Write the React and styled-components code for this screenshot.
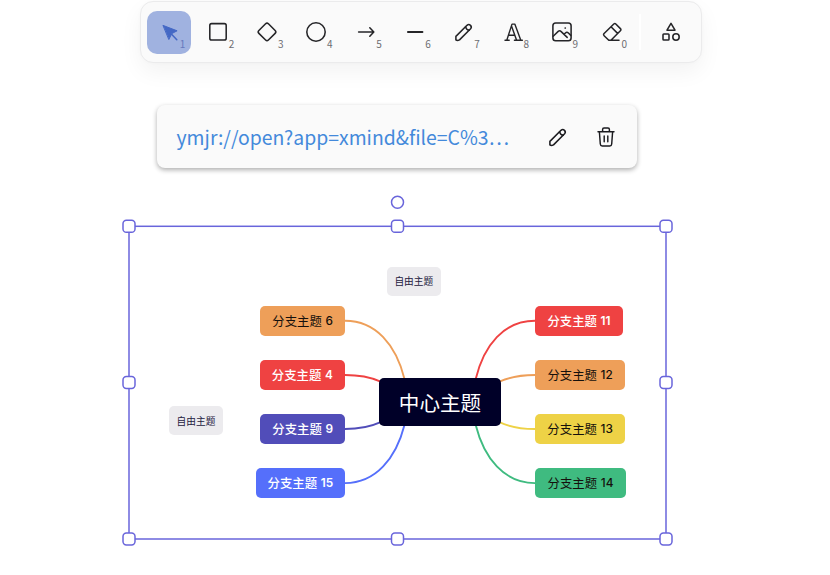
import React from "react";
import styled, { createGlobalStyle } from "styled-components";

const GlobalStyle = createGlobalStyle`
  * { box-sizing: border-box; }
  body { margin: 0; background: #fff; overflow: hidden; }
  button { border: 0; padding: 0; background: none; font: inherit; color: inherit; }
`;

const Page = styled.main`
  position: relative;
  width: 830px;
  height: 575px;
  overflow: hidden;
  background: #fff;
  color: #1b1b1f;
  font-family: "Noto Sans CJK SC", sans-serif;
`;

const Toolbar = styled.div`
  display: flex;
  align-items: center;
  width: 562px;
  height: 62px;
  margin: 1px 0 0 140px;
  padding: 0 6px;
  background: #fafafa;
  border: 1px solid #ebebec;
  border-radius: 13px;
  box-shadow: 0 9px 22px rgba(0, 0, 0, 0.05), 0 0 4px rgba(0, 0, 0, 0.02);
`;

const Tools = styled.div`
  display: flex;
  gap: 5.1px;
`;

const ToolButton = styled.button`
  position: relative;
  display: grid;
  place-items: center;
  width: 44px;
  height: 43px;
  border-radius: 10px;
  background: ${(p) => (p.$active ? "#a0b2e0" : "transparent")};
  color: ${(p) => (p.$active ? "#4468c5" : "#252528")};
`;

const KeyHint = styled.span`
  position: absolute;
  right: 5.7px;
  bottom: 3px;
  font-size: 10px;
  line-height: 14px;
  color: ${(p) => (p.$active ? "#6679bd" : "#6d6d71")};
`;

const Divider = styled.div`
  width: 2px;
  height: 36px;
  margin: 0 8px 0 6px;
  background: #fff;
`;

const Glyph = styled.svg`
  display: block;
  width: 26px;
  height: 26px;
  fill: none;
  stroke: currentColor;
  stroke-width: 1.55;
  stroke-linecap: round;
  stroke-linejoin: round;
`;

const LinkCard = styled.div`
  display: flex;
  align-items: center;
  width: 480px;
  height: 63px;
  margin: 42px 0 0 157px;
  padding: 0 18px 0 19.5px;
  background: #fafafa;
  border-radius: 8px;
  box-shadow: 0 2px 5px rgba(0, 0, 0, 0.32);
`;

const LinkText = styled.a`
  width: 350.5px;
  padding-top: 1px;
  color: #4389db;
  font-family: "Noto Sans CJK SC", sans-serif;
  font-size: 19.4px;
  line-height: 30px;
  white-space: nowrap;
`;

const CardButton = styled.button`
  display: grid;
  place-items: center;
  width: 26px;
  height: 26px;
  margin: 0 0 0 ${(p) => p.$gap}px;
`;

const Board = styled.section`
  position: absolute;
  inset: 0;
  pointer-events: none;
`;

const Drawing = styled.svg`
  position: absolute;
  inset: 0;
  width: 830px;
  height: 575px;
  fill: none;
`;

const Topic = styled.div`
  position: absolute;
  left: ${(p) => p.$x}px;
  top: ${(p) => p.$y}px;
  width: ${(p) => p.$w}px;
  height: 30.4px;
  display: flex;
  align-items: center;
  justify-content: center;
  gap: 3.6px;
  border-radius: 5px;
  background: ${(p) => p.$bg};
  color: ${(p) => (p.$dark ? "#15100c" : "#fff")};
  font-family: "Noto Sans CJK SC", sans-serif;
  font-weight: ${(p) => (p.$dark ? 400 : 500)};
  font-size: 12.4px;
  line-height: 18px;
  white-space: nowrap;
`;

const TopicNumber = styled.span`
  font-family: Inter, sans-serif;
  font-weight: ${(p) => (p.$dark ? 500 : 600)};
  font-size: 11.8px;
`;

const CentralTopic = styled(Topic)`
  height: 48px;
  background: #000028;
  font-size: 20.6px;
  font-weight: 400;
  line-height: 28px;
`;

const FreeTopic = styled(Topic)`
  height: 29px;
  background: #ecebee;
  color: #24213f;
  font-size: 9.7px;
  font-weight: 400;
`;

const PencilPath = () => (
  <g>
    <path d="M4.9 20.9 L4.9 17.4 L16 6.3 C18.4 4.2 21.6 7.4 19.6 9.8 L8.5 20.9 C7.3 21.5 5.9 21.7 4.9 20.9 Z" />
    <path d="M14.6 7.8 C15 9.8 16.3 11 18.3 11.2" />
  </g>
);

const tools = [
  {
    key: "1",
    active: true,
    icon: (
      <g>
        <path fill="currentColor" strokeWidth="1" d="M7.3 6.5 L21.1 11.8 L15.8 14.6 L13 20.2 Z" />
        <path d="M15.6 15.3 L20.8 20.7" />
      </g>
    ),
  },
  { key: "2", icon: <rect x="4.8" y="4.6" width="16.4" height="16.4" rx="1.8" /> },
  { key: "3", icon: <rect x="6.2" y="6.2" width="13.5" height="13.5" rx="2" transform="rotate(45 13 13)" /> },
  { key: "4", icon: <circle cx="13" cy="13" r="9.2" /> },
  { key: "5", icon: <path d="M6.6 13 H21.6 M17.8 8.8 L21.8 13 L17.8 17.2" /> },
  { key: "6", icon: <path d="M6.9 13 H21.5" strokeWidth="1.8" /> },
  { key: "7", icon: <PencilPath /> },
  {
    key: "8",
    icon: (
      <path
        strokeWidth="1.4"
        d="M5 21.2 H9.2 M14.4 21.2 H22.4 M6.8 21.2 L12 5.1 H14.8 L20.8 21.2 M16.6 21.2 L11.6 7.3 M8.6 16.2 H14.4"
      />
    ),
  },
  {
    key: "9",
    icon: (
      <g>
        <rect x="3.9" y="3.9" width="18.2" height="17.8" rx="2.8" />
        <path d="M4.2 17.2 L9.2 12.4 C10.4 11.4 11.2 11.6 12.2 12.6 L18.2 18.4 M15.2 15.2 L16.4 14 C17.4 13.1 18.4 13.1 19.4 14 L21.8 16.4" strokeWidth="1.5" />
        <path d="M16.2 9 H16.3" strokeWidth="1.7" />
      </g>
    ),
  },
  {
    key: "0",
    icon: (
      <path d="M21 21.2 H10.8 L6.1 16.7 C5.4 16 5.4 15.2 6.1 14.5 L15.8 5 C16.5 4.4 17.2 4.4 17.8 5 L22.4 9.6 C23.1 10.3 23.1 11.1 22.4 11.8 L13.2 21 M13 7.8 L19.6 14.4" />
    ),
  },
];

const branches = [
  { n: "6", x: 260.3, y: 305.6, w: 84.7, bg: "#ee9f59", dark: true },
  { n: "4", x: 259.6, y: 359.7, w: 85.4, bg: "#ef4242" },
  { n: "9", x: 260.3, y: 413.8, w: 84.7, bg: "#514db9" },
  { n: "15", x: 255.6, y: 467.9, w: 89.4, bg: "#556ffb" },
  { n: "11", x: 535, y: 305.6, w: 88, bg: "#ef4242" },
  { n: "12", x: 535, y: 359.7, w: 90.2, bg: "#ee9f59", dark: true },
  { n: "13", x: 535, y: 413.8, w: 90.2, bg: "#eed246", dark: true },
  { n: "14", x: 535, y: 467.9, w: 91, bg: "#3fbb80", dark: true },
];

const connectors = [
  ["#ee9f59", "M345 320.8 C376 320.8 396 345 404.5 379"],
  ["#ef4242", "M345 375 C359 375 370 377 380 381.4"],
  ["#514db9", "M345 429 C359 429 370 427 380 422.4"],
  ["#556ffb", "M345 483.1 C376 483.1 396 458 404.5 425"],
  ["#ef4242", "M535 320.8 C504 320.8 484 345 475.7 379"],
  ["#ee9f59", "M535 375 C521 375 510 377 500 381.4"],
  ["#eed246", "M535 429 C521 429 510 427 500 422.4"],
  ["#3fbb80", "M535 483.1 C504 483.1 484 458 475.7 425"],
];

const handles = [
  [129, 226.3], [397.5, 226.3], [666, 226.3],
  [129, 382.5], [666, 382.5],
  [129, 539], [397.5, 539], [666, 539],
];

export default function App() {
  return (
    <Page>
      <GlobalStyle />
      <Toolbar>
        <Tools>
          {tools.map((t) => (
            <ToolButton key={t.key} $active={t.active}>
              <Glyph viewBox="0 0 26 26">{t.icon}</Glyph>
              <KeyHint $active={t.active}>{t.key}</KeyHint>
            </ToolButton>
          ))}
        </Tools>
        <Divider />
        <ToolButton>
          <Glyph viewBox="0 0 26 26">
            <path d="M13 4.4 L17 11.2 H9 Z" />
            <rect x="5" y="15" width="6" height="6" rx="0.8" />
            <circle cx="18" cy="18" r="3.2" />
          </Glyph>
        </ToolButton>
      </Toolbar>

      <LinkCard>
        <LinkText>ymjr://open?app=xmind&amp;file=C%3…</LinkText>
        <CardButton $gap={18}>
          <Glyph viewBox="0 0 26 26"><PencilPath /></Glyph>
        </CardButton>
        <CardButton $gap={22}>
          <Glyph viewBox="0 0 26 26">
            <path d="M5 7.8 H21 M6.4 8 L7.3 20 C7.4 21.3 8 21.9 9.2 21.9 H16.8 C18 21.9 18.6 21.3 18.7 20 L19.6 8 M9.6 7.6 V5.5 C9.6 4.5 10 4 11 4 H15 C16 4 16.4 4.5 16.4 5.5 V7.6 M11.2 12 V17.8 M14.8 12 V17.8" strokeWidth="1.45" />
          </Glyph>
        </CardButton>
      </LinkCard>

      <Board>
        <Drawing viewBox="0 0 830 575">
          {connectors.map(([color, d]) => (
            <path key={d} d={d} stroke={color} strokeWidth="1.9" />
          ))}
        </Drawing>
        {branches.map((b) => (
          <Topic key={b.n} $x={b.x} $y={b.y} $w={b.w} $bg={b.bg} $dark={b.dark}>
            <span>分支主题</span>
            <TopicNumber $dark={b.dark}>{b.n}</TopicNumber>
          </Topic>
        ))}
        <CentralTopic $x={379} $y={378} $w={122}>中心主题</CentralTopic>
        <FreeTopic $x={387} $y={266.6} $w={53.6}>自由主题</FreeTopic>
        <FreeTopic $x={169.2} $y={406.2} $w={53.6}>自由主题</FreeTopic>
        <Drawing viewBox="0 0 830 575" stroke="#6965db">
          <rect x="129" y="226.3" width="537" height="312.7" strokeWidth="1.5" />
          <circle cx="397.5" cy="202.3" r="6" strokeWidth="1.5" fill="#fff" />
          {handles.map(([x, y]) => (
            <rect key={`${x}-${y}`} x={x - 6} y={y - 6} width="12" height="12" rx="3.4" strokeWidth="1.5" fill="#fff" />
          ))}
        </Drawing>
      </Board>
    </Page>
  );
}
